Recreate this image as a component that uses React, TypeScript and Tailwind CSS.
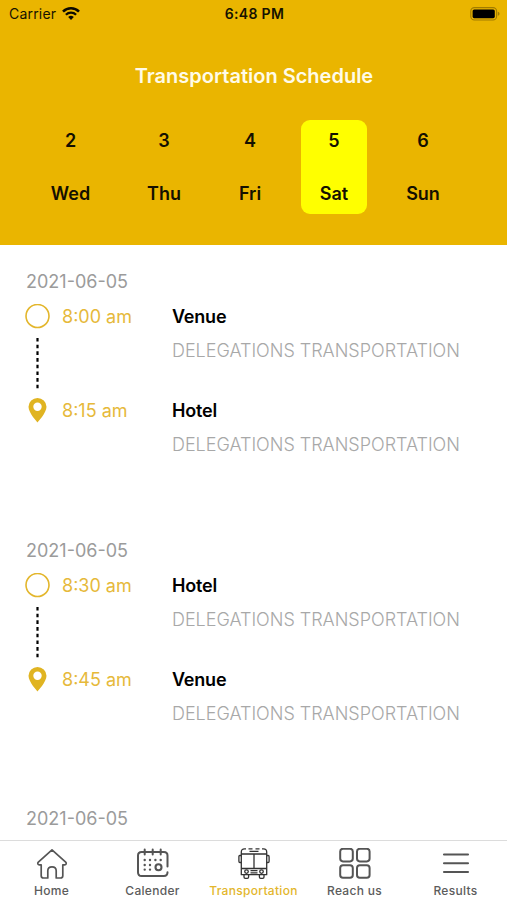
import clsx from 'clsx';
import { type ReactNode } from 'react';

type Stop = {
  time: string;
  place: string;
};

type Trip = {
  date: string;
  stops: Stop[];
};

const DAYS = [
  { day: 2, name: 'Wed', width: 'w-[75px]' },
  { day: 3, name: 'Thu', width: 'w-[70px]' },
  { day: 4, name: 'Fri', width: 'w-[60px]' },
  { day: 5, name: 'Sat', width: 'w-[66px]' },
  { day: 6, name: 'Sun', width: 'w-[70px]' },
];

const TRIPS: Trip[] = [
  {
    date: '2021-06-05',
    stops: [
      { time: '8:00 am', place: 'Venue' },
      { time: '8:15 am', place: 'Hotel' },
    ],
  },
  {
    date: '2021-06-05',
    stops: [
      { time: '8:30 am', place: 'Hotel' },
      { time: '8:45 am', place: 'Venue' },
    ],
  },
  { date: '2021-06-05', stops: [] },
];

function WifiIcon() {
  return (
    <svg className="h-[14px] w-[18px]" viewBox="0 0 18 14" fill="none" stroke="#0d0b00">
      <path d="M1 4.6a11.4 11.4 0 0 1 16 0" strokeWidth="2.6" />
      <path d="M3.9 7.7a7.2 7.2 0 0 1 10.2 0" strokeWidth="2.3" />
      <path d="M9 12.9 6.2 10.1a4 4 0 0 1 5.6 0z" fill="#0d0b00" stroke="none" />
    </svg>
  );
}

function BatteryIcon() {
  return (
    <svg className="h-[14px] w-[30px]" viewBox="0 0 30 14" fill="none">
      <rect x="0.8" y="0.6" width="25.8" height="12.4" rx="3.6" stroke="#a17c00" strokeWidth="1.1" />
      <rect x="2.6" y="2.4" width="22.2" height="8.8" rx="1.6" fill="#000" />
      <path d="M27.8 4.8v4c1.1-.4 1.7-1.1 1.7-2s-.6-1.6-1.7-2z" fill="#a17c00" />
    </svg>
  );
}

function StartIcon() {
  return (
    <svg className="h-[25px] w-[25px] shrink-0" viewBox="0 0 25 25" fill="none">
      <circle cx="12.5" cy="12" r="11.5" stroke="#e3b62c" strokeWidth="1.6" />
    </svg>
  );
}

function PinIcon() {
  return (
    <svg className="h-[25px] w-[25px]" viewBox="0 0 25 25">
      <path
        fill="#e0b422"
        fillRule="evenodd"
        d="M12.5 0a9 9 0 0 0-9 8.800c0 6.200 9 15.700 9 15.700s9-9.500 9-15.700a9 9 0 0 0-9-8.800zm0 4.600a4.200 4.200 0 1 1 0 8.400 4.200 4.200 0 0 1 0-8.400z"
      />
    </svg>
  );
}

function HomeIcon() {
  return (
    <svg className="h-8 w-8" viewBox="0 0 32 32" fill="none" stroke="#555" strokeWidth="1.7" strokeLinejoin="round">
      <path d="M16 1.800 2.300 14.200c-1.100 1.100-.4 2.700 1 2.700h1.900v10.800c0 1.500.8 2.300 2.300 2.300h4.300v-7.200c0-2.300 1.700-3.900 4.200-3.900s4.200 1.600 4.200 3.900V30h4.300c1.500 0 2.300-.8 2.300-2.300V16.900h1.900c1.400 0 2.100-1.600 1-2.700z" />
    </svg>
  );
}

function CalendarIcon() {
  return (
    <svg className="h-8 w-8" viewBox="0 0 32 32" fill="none" stroke="#555" strokeLinecap="round">
      <path d="M30.500 18.500V7.500c0-2.500-1.400-3.600-3.600-3.600H4.600C2.400 3.900 1 5 1 7.500v16.700C1 26.700 2.400 28 4.600 28h22.300c2.200 0 3.600-1.300 3.600-3.700" strokeWidth="2" />
      <path d="M7.700 1.500v5M15.700 1.500v5M23.700 1.500v5" strokeWidth="2" />
      <path d="M7.700 12h.01M13 12h.01M18.400 12h.01M23.700 12h.01M7.700 17h.01M13 17h.01M7.700 21.600h.01M13 21.600h.01" strokeWidth="2.400" />
      <circle cx="21.500" cy="19.200" r="3" strokeWidth="2.100" />
    </svg>
  );
}

function BusIcon() {
  return (
    <svg className="h-8 w-8" viewBox="0 0 32 32" fill="none" stroke="#333" strokeWidth="1.3" strokeLinejoin="round">
      <path d="M8 .8H6.500C4.500.8 3.300 2 3.300 4v22.700h25.400V4c0-2-1.200-3.200-3.200-3.200H24M10.500.8h4M17.500.8h4" />
      <path d="M11.500 3.400h9M3.300 6h25.400M3.300 20.500h25.400M16 6v14.500" />
      <path d="M3.300 7.500H1.800C1.100 7.500.9 8.100.9 8.700v4.600c0 .8.400 1.200 1 1.200h1.400M28.700 7.500h1.500c.7 0 .9.600.9 1.200v4.600c0 .8-.4 1.200-1 1.200h-1.400" />
      <circle cx="8.500" cy="23.600" r="1.800" />
      <circle cx="23.500" cy="23.600" r="1.800" />
      <path d="M12.500 22.600h7M12.500 24.900h7" />
      <path d="M6 26.700V29c0 .9.500 1.400 1.300 1.400h2c.8 0 1.300-.5 1.300-1.400v-2.300M21.400 26.700V29c0 .9.500 1.400 1.300 1.400h2c.8 0 1.300-.5 1.300-1.400v-2.300" />
    </svg>
  );
}

function GridIcon() {
  return (
    <svg className="h-8 w-8" viewBox="0 0 32 32" fill="none" stroke="#555" strokeWidth="2">
      <rect x="1.200" y="0.800" width="12.600" height="12.600" rx="2.800" />
      <rect x="18" y="0.800" width="12.600" height="12.600" rx="2.800" />
      <rect x="1.200" y="17.200" width="12.600" height="12.600" rx="2.800" />
      <rect x="18" y="17.200" width="12.600" height="12.600" rx="2.800" />
    </svg>
  );
}

function MenuIcon() {
  return (
    <svg className="h-8 w-8" viewBox="0 0 32 32" fill="none" stroke="#555" strokeWidth="2.1" strokeLinecap="round">
      <path d="M4 6.500h24M4 15.300h24M4 24h24" />
    </svg>
  );
}

function StopRow({ stop, children }: { stop: Stop; children: ReactNode }) {
  return (
    <div className="flex h-[94px] items-start">
      <div className="flex w-[25px] flex-col items-center">{children}</div>
      <div className="ml-3 w-[110px] text-[18px] leading-[26px] text-[#e6b93a]">{stop.time}</div>
      <div>
        <div className="text-[18px] leading-[26px] font-semibold tracking-[-0.2px] text-black">{stop.place}</div>
        <div className="mt-2 text-[18px] leading-[26px] font-light tracking-[-0.02px] whitespace-nowrap text-[#a8a8a8]">
          DELEGATIONS TRANSPORTATION
        </div>
      </div>
    </div>
  );
}

function TripCard({ trip }: { trip: Trip }) {
  return (
    <section className="h-[268.600px] shrink-0 pl-[25px]">
      <div className="mb-[9px] pl-px text-[18px] leading-[26px] text-[#9b9b9b]">{trip.date}</div>
      {trip.stops.map((stop, index) => (
        <StopRow key={stop.time} stop={stop}>
          {index === 0 ? (
            <>
              <StartIcon />
              <svg className="mt-2 h-[52px] w-[3px]" viewBox="0 0 3 52">
                <path d="M1.500 1v51" stroke="#000" strokeWidth="2.200" strokeDasharray="3.600 3.080" />
              </svg>
            </>
          ) : (
            <PinIcon />
          )}
        </StopRow>
      ))}
    </section>
  );
}

function Tab({ label, active, children }: { label: string; active?: boolean; children: ReactNode }) {
  return (
    <div className="flex w-[101px] flex-col items-center pt-[7px]">
      {children}
      <span
        className={clsx(
          'mt-[3px] text-[12px] leading-4 font-medium whitespace-nowrap tracking-[0.3px]',
          active ? 'text-[#e3b62c]' : 'text-[#5c5c5c]'
        )}>
        {label}
      </span>
    </div>
  );
}

export default function App() {
  return (
    <div className="flex h-[900px] w-[507px] flex-col overflow-hidden bg-white font-['Inter',sans-serif]">
      <header className="h-[245px] shrink-0 bg-[#eab500]">
        <div className="grid h-[27px] grid-cols-3 items-center pr-[7px] pl-[9px] text-[14px] text-[#161200]">
          <div className="flex items-center gap-1.5">
            <span className="tracking-[0.2px]">Carrier</span>
            <WifiIcon />
          </div>
          <div className="text-center font-semibold tracking-[0.3px]">6:48 PM</div>
          <div className="flex justify-end">
            <BatteryIcon />
          </div>
        </div>
        <h1 className="mt-[35px] pl-px text-center text-[20px] leading-7 font-semibold text-[#fffbe8]">
          Transportation Schedule
        </h1>
        <div className="mt-[29.500px] flex gap-[21px] pl-[33px] text-[18px] leading-[26px] font-semibold text-[#141000]">
          {DAYS.map(({ day, name, width }) => (
            <div
              key={day}
              className={clsx(
                'flex h-[94px] flex-col items-center justify-between rounded-[9px] pt-2 pb-[7px]',
                width,
                day === 5 && 'bg-[#ffff00]'
              )}>
              <span>{day}</span>
              <span>{name}</span>
            </div>
          ))}
        </div>
      </header>
      <main className="flex min-h-0 flex-1 flex-col overflow-hidden pt-6">
        {TRIPS.map((trip, index) => (
          <TripCard key={index} trip={trip} />
        ))}
      </main>
      <nav className="flex h-[60px] shrink-0 justify-center border-t border-[#dcdcdc] bg-white">
        <Tab label="Home">
          <HomeIcon />
        </Tab>
        <Tab label="Calender">
          <CalendarIcon />
        </Tab>
        <Tab label="Transportation" active>
          <BusIcon />
        </Tab>
        <Tab label="Reach us">
          <GridIcon />
        </Tab>
        <Tab label="Results">
          <MenuIcon />
        </Tab>
      </nav>
    </div>
  );
}
